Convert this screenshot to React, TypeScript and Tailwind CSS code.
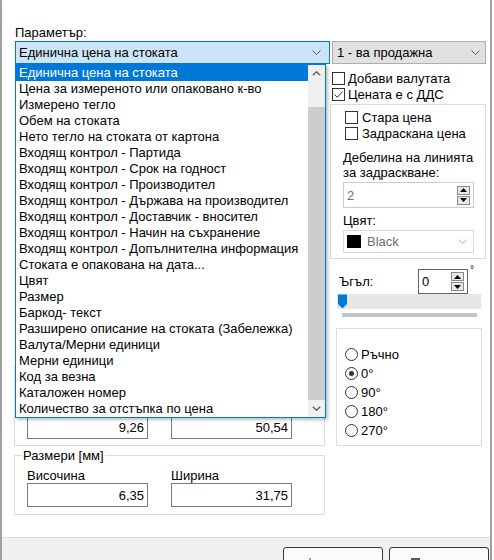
import React from 'react';

const items = [
  'Единична цена на стоката',
  'Цена за измереното или опаковано к-во',
  'Измерено тегло',
  'Обем на стоката',
  'Нето тегло на стоката от картона',
  'Входящ контрол - Партида',
  'Входящ контрол - Срок на годност',
  'Входящ контрол - Производител',
  'Входящ контрол - Държава на производител',
  'Входящ контрол - Доставчик - вносител',
  'Входящ контрол - Начин на съхранение',
  'Входящ контрол - Допълнителна информация',
  'Стоката е опакована на дата...',
  'Цвят',
  'Размер',
  'Баркод- текст',
  'Разширено описание на стоката (Забележка)',
  'Валута/Мерни единици',
  'Мерни единици',
  'Код за везна',
  'Каталожен номер',
  'Количество за отстъпка по цена',
];

function Chevron({ color = '#606060' }: { color?: string }) {
  return (
    <svg width="9" height="5" viewBox="0 0 9 5" className="shrink-0">
      <path d="M0.5 0.5 L4.5 4.5 L8.5 0.5" fill="none" stroke={color} strokeWidth={1} />
    </svg>
  );
}

function CheckBox({ checked }: { checked?: boolean }) {
  return (
    <span className="w-[13px] h-[13px] border border-[#333333] bg-white flex items-center justify-center shrink-0">
      {checked && (
        <svg width="11" height="11" viewBox="0 0 11 11">
          <path d="M1.5 5.5 L4.3 8.3 L9.5 2.5" fill="none" stroke="#333333" strokeWidth={1} />
        </svg>
      )}
    </span>
  );
}

function Radio({ checked }: { checked?: boolean }) {
  return (
    <span className="w-[13px] h-[13px] rounded-full border border-[#333333] bg-white flex items-center justify-center shrink-0">
      {checked && <span className="w-[5px] h-[5px] rounded-full bg-[#333333]" />}
    </span>
  );
}

function SpinButtons() {
  return (
    <div className="flex flex-col gap-[1px]">
      <div className="w-[13px] h-[9px] border border-[#8a8a8a] bg-[#e8e8e8] flex items-center justify-center">
        <svg width="7" height="4" viewBox="0 0 7 4">
          <path d="M3.5 0 L7 4 L0 4 Z" fill="#000" />
        </svg>
      </div>
      <div className="w-[13px] h-[9px] border border-[#8a8a8a] bg-[#e8e8e8] flex items-center justify-center">
        <svg width="7" height="4" viewBox="0 0 7 4">
          <path d="M0 0 L7 0 L3.5 4 Z" fill="#000" />
        </svg>
      </div>
    </div>
  );
}

function NumBox({ value, className = '' }: { value: string; className?: string }) {
  return (
    <div className={`w-[121px] h-[23px] border border-[#7a7a7a] bg-white flex items-center justify-end pr-[3px] ${className}`}>
      {value}
    </div>
  );
}

export default function App() {
  return (
    <div className="w-[494px] h-[560px] bg-white overflow-hidden font-['Liberation_Sans',Arial,sans-serif] text-[13px] leading-[15px] text-black">
      <div className="w-[492px] h-full border-l-2 border-r-2 border-[#a0a0a0] flex flex-col">
        <main className="relative h-[537px] shrink-0 pl-[12px] pt-[25px]">
          <div className="pl-[1px] h-[16px]">Параметър:</div>

          {/* combos */}
          <div className="flex ml-[1px] gap-[2px]">
            <div className="w-[315px] h-[23px] border border-[#0078d7] bg-[#cce4f7] flex items-center justify-between pl-[3px] pr-[8px]">
              <span>Единична цена на стоката</span>
              <Chevron />
            </div>
            <div className="w-[154px] h-[23px] border border-[#adadad] bg-[#e1e1e1] flex items-center justify-between pl-[4px] pr-[5px]">
              <span>1 - ва продажна</span>
              <Chevron />
            </div>
          </div>

          <div className="flex gap-[5px]">
            {/* left column (mostly under the open list) */}
            <div className="w-[311px] flex flex-col">
              <div className="mt-[302px] h-[80px] border border-[#dcdcdc] px-[12px] pt-[49px]">
                <div className="flex gap-[23px]">
                  <NumBox value="9,26" />
                  <NumBox value="50,54" />
                </div>
              </div>
              <div className="mt-[9px] h-[60px] border border-[#dcdcdc] px-[12px]">
                <div className="-mt-[7px] ml-[-5px] px-[1px] bg-white w-fit leading-[14px]">Размери [мм]</div>
                <div className="flex gap-[23px] mt-[5px]">
                  <div className="flex flex-col">
                    <span>Височина</span>
                    <NumBox value="6,35" className="h-[24px]" />
                  </div>
                  <div className="flex flex-col">
                    <span>Ширина</span>
                    <NumBox value="31,75" className="h-[24px]" />
                  </div>
                </div>
              </div>
            </div>

            {/* right column */}
            <div className="w-[156px] flex flex-col">
              <div className="mt-[6px] h-[16px] flex items-center gap-[3px] pl-[2px]">
                <CheckBox />
                <span>Добави валутата</span>
              </div>
              <div className="h-[16px] flex items-center gap-[3px] pl-[2px]">
                <CheckBox checked />
                <span>Цената е с ДДС</span>
              </div>

              <div className="mt-[2px] h-[155px] border border-[#dcdcdc] pl-[12px] pt-[4px]">
                <div className="h-[16px] flex items-center gap-[4px] pl-[2px]">
                  <CheckBox />
                  <span>Стара цена</span>
                </div>
                <div className="h-[16px] flex items-center gap-[4px] pl-[2px]">
                  <CheckBox />
                  <span>Задраскана цена</span>
                </div>
                <div className="mt-[9px] whitespace-nowrap">Дебелина на линията</div>
                <div>за задраскване:</div>
                <div className="mt-[2px] w-[131px] h-[26px] border border-[#cccccc] flex items-center justify-between pl-[3px] pr-[3px]">
                  <span className="text-[#6d6d6d]">2</span>
                  <SpinButtons />
                </div>
                <div className="mt-[5px]">Цвят:</div>
                <div className="mt-[2px] w-[131px] h-[23px] border border-[#d9d9d9] flex items-center pl-[3px] pr-[6px]">
                  <span className="w-[14px] h-[13px] bg-black shrink-0" />
                  <span className="ml-[6px] text-[#6d6d6d] flex-1">Black</span>
                  <Chevron color="#b0b0b0" />
                </div>
              </div>

              <div className="mt-[10px] flex pl-[9px]">
                <div className="w-[79px] h-[25px] flex items-center">Ъгъл:</div>
                <div className="w-[50px] h-[25px] border border-[#646464] flex items-center justify-between pl-[3px] pr-[3px]">
                  <span>0</span>
                  <SpinButtons />
                </div>
                <span className="ml-[2px] -mt-[4px] text-[10px] leading-[10px]">°</span>
              </div>

              <div className="ml-[7px] w-[144px] h-[15px] bg-[#e6e8e8] pl-[1px]">
                <svg width="10" height="15" viewBox="0 0 10 15">
                  <path d="M0 0.5 H9 V10 L4.5 14.5 L0 10 Z" fill="#0078d7" />
                </svg>
              </div>
              <div className="mt-[4px] ml-[12px] w-[135px] h-[4px] bg-[#c4c4c4]" />

              <div className="mt-[11px] ml-[6px] w-[146px] h-[118px] border border-[#dcdcdc] pl-[8px] pt-[16px]">
                {[
                  ['Ръчно', false],
                  ['0°', true],
                  ['90°', false],
                  ['180°', false],
                  ['270°', false],
                ].map(([label, checked]) => (
                  <div key={label as string} className="h-[19px] flex items-center gap-[3px]">
                    <Radio checked={checked as boolean} />
                    <span>{label as string}</span>
                  </div>
                ))}
              </div>
            </div>
          </div>

          {/* open dropdown list */}
          <div className="absolute left-[13px] top-[64px] w-[311px] h-[354px] border border-[#0078d7] bg-white flex shadow-[2px_2px_3px_rgba(0,0,0,0.25)]">
            <div className="flex-1 flex flex-col">
              {items.map((item, i) => (
                <div
                  key={item}
                  className={`h-[16px] leading-[16px] pl-[3px] whitespace-nowrap overflow-hidden ${
                    i === 0 ? 'bg-[#0078d7] text-white' : ''
                  }`}
                >
                  {item}
                </div>
              ))}
            </div>
            <div className="w-[17px] bg-[#f0f0f0] flex flex-col">
              <div className="h-[17px] flex items-center justify-center">
                <svg width="9" height="5" viewBox="0 0 9 5">
                  <path d="M0.8 4.3 L4.5 0.8 L8.2 4.3" fill="none" stroke="#606060" strokeWidth={1.4} />
                </svg>
              </div>
              <div className="h-[25px]" />
              <div className="flex-1 bg-[#cdcdcd]" />
              <div className="h-[17px] flex items-center justify-center">
                <svg width="9" height="5" viewBox="0 0 9 5">
                  <path d="M0.8 0.7 L4.5 4.2 L8.2 0.7" fill="none" stroke="#606060" strokeWidth={1.4} />
                </svg>
              </div>
            </div>
          </div>
        </main>

        <footer className="flex-1 min-h-0 overflow-hidden border-t border-[#dadada] bg-[#f0f0f0] flex items-start justify-end gap-[6px] pt-[9px] pr-[1px]">
          <button className="w-[100px] h-[30px] shrink-0 rounded-[3px] border border-[#3a3a3a] bg-[#fbfbfb] flex justify-start pl-[23px] pt-[10px]">
            <svg width="6" height="6" viewBox="0 0 6 6">
              <path d="M3 0 V6 M0 3 H6" stroke="#3aa53a" strokeWidth={1.5} />
            </svg>
          </button>
          <button className="w-[100px] h-[30px] shrink-0 rounded-[3px] border border-[#3a3a3a] bg-[#fbfbfb] flex justify-start pl-[21px] pt-[10px]">
            <span className="w-[9px] h-[6px] bg-[#5a5a5a]" />
          </button>
        </footer>
      </div>
    </div>
  );
}
